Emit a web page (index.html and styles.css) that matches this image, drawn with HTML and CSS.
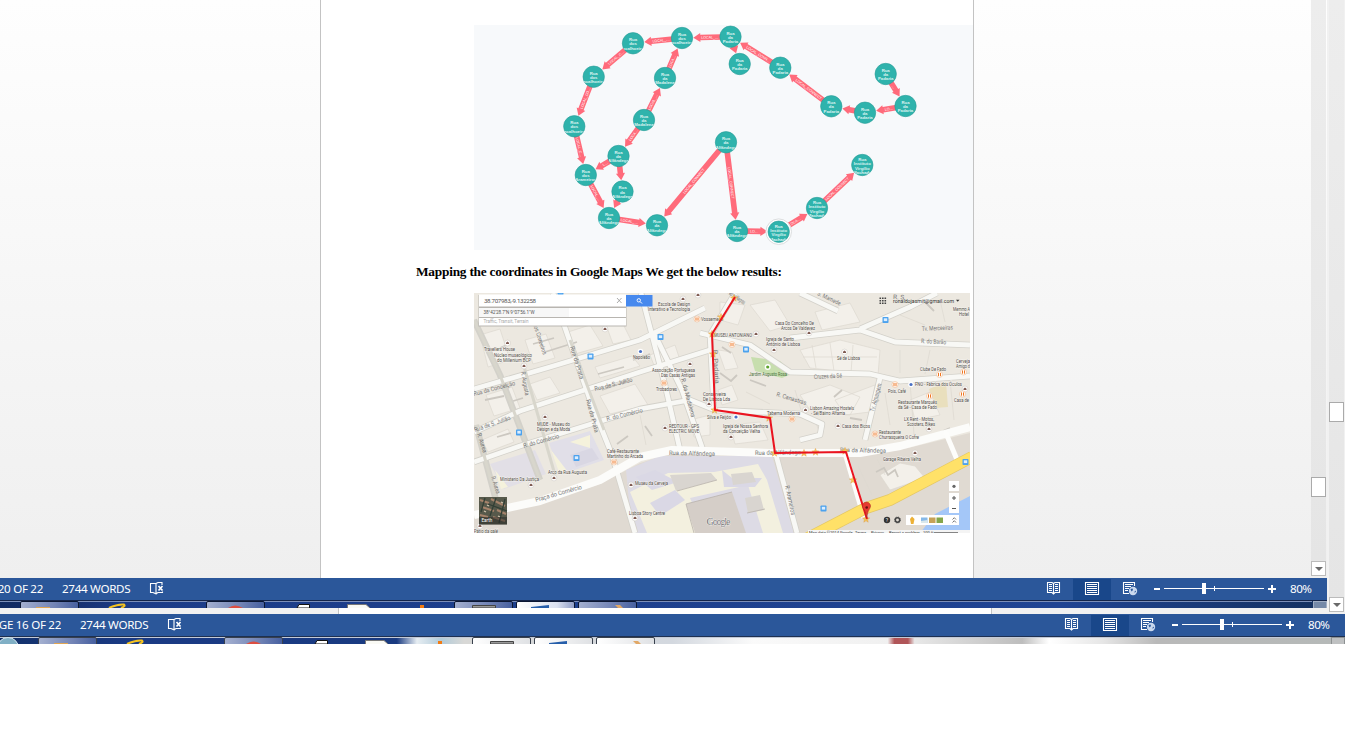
FILE: index.html
```html
<!DOCTYPE html>
<html lang="en">
<head>
<meta charset="utf-8">
<title>Document</title>
<link rel="stylesheet" href="styles.css">
</head>
<body>
<svg class="defs" aria-hidden="true">
  <defs>
    <symbol id="proof" viewBox="0 0 16 14">
      <path d="M7 2.5H1.5V11.5H4L7 12.8ZM7 2.5L9 1.5H13V4M7 12.8L9 11.5H13.5V10.5" fill="none" stroke="#fff" stroke-width="1.1"/>
      <path d="M9.5 5L13.5 9.5M13.5 5L9.5 9.5" stroke="#fff" stroke-width="1.7"/>
    </symbol>
    <symbol id="controls" viewBox="1040 0 240 22">
      <rect x="1073" y="1" width="38" height="21" fill="#19478a"/>
      <g fill="none" stroke="#fff" stroke-width="1.1">
        <path d="M1053.5 5.5L1052 4.5H1047.5V14.5H1052L1053.5 16L1055 14.5H1059.5V4.5H1055ZM1053.5 5V16"/>
        <path d="M1049 6.5H1052M1049 8.5H1052M1049 10.5H1052M1049 12.5H1052M1055 6.5H1058M1055 8.5H1058M1055 10.5H1058M1055 12.5H1058"/>
        <path d="M1085.5 4.5H1098.5V16.5H1085.5ZM1087 6.5H1097M1087 8.5H1097M1087 10.5H1097M1087 12.5H1097M1087 14.5H1097"/>
        <path d="M1129 15.5H1123.5V4.5H1134.5V8M1125 6.5H1133M1125 8.5H1131M1125 10.5H1129M1125 12.5H1128"/>
      </g>
      <circle cx="1133" cy="13" r="4.2" fill="#c9d8ee"/>
      <path d="M1130.500 11L1132.500 10.500L1133 12L1131.500 13.500ZM1134 14.500L1135.500 12.500L1136 14Z" fill="#2b579a"/>
      <g fill="#fff">
        <rect x="1154" y="10" width="6" height="2"/>
        <rect x="1164" y="10" width="100" height="1"/>
        <rect x="1202" y="5" width="4" height="11"/>
        <rect x="1214" y="8" width="1" height="5"/>
        <rect x="1268" y="10" width="8" height="2"/>
        <rect x="1271" y="7" width="2" height="8"/>
      </g>
    </symbol>
    <linearGradient id="tab" x1="0" x2="1"><stop offset="0" stop-color="#a4b0d0"/><stop offset=".6" stop-color="#7183b5"/><stop offset="1" stop-color="#465f9f"/></linearGradient>
    <linearGradient id="tabLight" x1="0" x2="1"><stop offset="0" stop-color="#fff"/><stop offset=".7" stop-color="#dbe1f0"/><stop offset="1" stop-color="#8f9dc6"/></linearGradient>
    <linearGradient id="tabWhite" x1="0" x2="1"><stop offset="0" stop-color="#fff"/><stop offset="1" stop-color="#dfe1e4"/></linearGradient>
    <g id="taskicons">
      <path d="M36 8V7H50V8" fill="#e0a552"/>
      <path d="M109 8Q117 4 124 4.500Q126 6 121 8" fill="none" stroke="#f5c320" stroke-width="2"/>
      <path d="M228 8Q235 3 243 8Z" fill="#dd4e41"/>
      <path d="M297 8L299 4.500H309.500V8Z" fill="#fff" stroke="#111"/>
      <path d="M347.500 8V4.500H366L370 8" fill="#fafaf5" stroke="#777"/>
      <rect x="420" y="5" width="4" height="3" fill="#f27b12"/>
      <path d="M472.500 8V5.500H495.500V8Z" fill="#999" stroke="#444"/>
      <path d="M531 8V7L549 5V8Z" fill="#265eaa"/>
      <path d="M615 5L620 5L623 8H618Z" fill="#e1a867"/>
    </g>
  </defs>
</svg>

<div class="screen">
  <div class="upper">
    <div class="stack">
      <div class="window">
        <div class="workspace">
          <div class="canvas">
            <div class="page">
              <svg class="graph" id="graph" viewBox="474 25 499 225"></svg>
              <h1 class="heading">Mapping the coordinates in Google Maps We get the below results:</h1>
              <svg class="map" id="map" viewBox="474 293 496 240">
                <rect x="474" y="293" width="496" height="240" fill="#ece8e0"/>
                <g class="area">
                  <path d="M474 518L540 504L600 484L640 463L672 453L770 456L850 456L900 450L970 433V533H474Z" fill="#e0dad2"/>
                  <path d="M626 470L660 456H772L794 533H632Z" fill="#dddbe5"/>
                  <path d="M630 492L668 473L714 472L758 464L767 480L783 533H763L748 485L690 498L705 533H647Z" fill="#f3f0df"/>
                  <path d="M636 477L655 470L678 482L652 490ZM650 503L675 490L685 500L660 516ZM722 470L732 478H762L755 487L724 487Z" fill="#dad8e5"/>
                  <path d="M670 475L711 473L717 480L676 491ZM731 474L752 472L756 482L733 485ZM745 498L760 495L764 510L748 513Z" fill="#d9d5d0"/>
                  <path d="M686 504L732 492L746 533H695Z" fill="#d5cec8"/>
                  <path d="M677 491L717 480M747 513L765 509M694 533L686 504L732 492" fill="none" stroke="#b9b3ac" stroke-width=".8"/>
                  <path d="M490 464L535 450L546 474L504 489Z" fill="#e2dfe6"/>
                  <path d="M549 443L590 431L604 460L560 475Z" fill="#e1dfe8"/>
                  <path d="M551 450L568 472L560 475ZM570 442L590 435V448ZM495 470L508 487L501 489Z" fill="#f5f2dc"/>
                  <path d="M570 455L592 448L599 459L576 467Z" fill="#d9d7e3"/>
                  <path d="M751 357L780 361L794 373L782 378L755 371Z" fill="#c7deae"/>
                  <path d="M929 389L946 382L948 407L935 408Z" fill="#e9dfbd"/>
                </g>
                <g class="lots">
                  <path d="M480 335L500 329L510 360L488 367ZM525 340L546 334L555 358L533 364ZM565 333L590 325L603 346L575 354ZM605 322L620 318L631 340L613 344ZM486 395L512 387L520 408L494 416ZM530 384L550 377L560 393L537 400ZM595 367L632 356L640 366L600 378ZM482 440L508 429L514 442L488 452ZM600 396L635 384L648 405L610 414ZM718 390L732 385L738 400L722 405ZM718 350L732 352L738 368L725 370ZM800 350L840 340L880 350L878 375L810 368ZM815 312L850 303L860 322L822 330ZM800 395L830 385L860 397L850 415L810 410ZM835 400L875 385L870 412L845 415ZM880 475L900 463L915 466L925 478L890 490ZM910 400L930 392L940 415L915 420ZM720 302L745 305L738 325L720 320ZM750 305L775 300L790 325L770 331ZM650 355L675 345L680 360L655 368ZM690 420L710 415V435L694 437ZM730 425L760 422L768 440L735 444Z"/>
                  <path d="M812 345L816 368M830 343L834 371M853 345L851 373M803 357H877M900 350V373M930 350L925 374M795 390L801 410M885 393L890 425M910 382L914 435M950 380L954 420M815 420L821 437M870 420L868 440M900 315L925 325M940 300L945 322M858 466L872 495M877 459L885 475M640 415L646 445M746 392L770 404"/>
                </g>
                <g class="ridge">
                  <path d="M500 348L509 344M533 344L554 338M545 352L577 342M598 374L624 367M602 390L627 381M485 400L504 396M510 402L523 398M497 437L511 433M617 444L628 436M633 360L650 354M722 347L731 353M720 373L731 381L737 375M645 426L652 436M750 380L766 386M850 418L862 420M872 405L879 400M834 397L842 390M924 301L934 311M943 431L950 428M876 472L884 468L888 475L895 470L898 477"/>
                </g>
                <g class="road-edge">
                  <path d="M474 389L550 367L640 340L705 308"/>
                  <path d="M474 432L520 411L640 372L710 350M474 462L520 446L640 409L690 400L715 410L800 414"/>
                  <path d="M553 293L590 400L612 455L635 533M641 293L665 385L680 450M655 335L682 390L703 450M735 293L710 335L714 410M700 333L750 345L790 372L870 374L900 381L970 376"/>
                  <path d="M800 293L838 311M790 338L860 330L895 342L970 345M860 329L910 307L937 293M776 455L797 533M474 320L500 375L540 480M476 425L500 515M880 378L865 440M800 440L820 435L822 424L800 414"/>
                </g>
                <g class="road">
                  <path d="M474 389L550 367L640 340L705 308M474 432L520 411L640 372L710 350M474 462L520 446L640 409L690 400L715 410L800 414"/>
                  <path d="M553 293L590 400L612 455L635 533M641 293L665 385L680 450M655 335L682 390L703 450M735 293L710 335L714 410M700 333L750 345L790 372L870 374L900 381L970 376"/>
                  <path d="M800 293L838 311M790 338L860 330L895 342L970 345M860 329L910 307L937 293M776 455L797 533M880 378L865 440M800 440L820 435L822 424L800 414"/>
                </g>
                <path d="M474 320L500 375L540 480M476 425L500 515M523 363L555 475M570 340L604 430" stroke="#d8d6cc" stroke-width="3" fill="none"/>
                <path class="avenue" d="M474 515L540 501L600 480L640 457L672 450L770 453L860 453L900 446L970 427"/>
                <path d="M845 453L864 518M945 431L958 462" stroke="#fdfdfb" stroke-width="5" fill="none"/>
                <path d="M972 495L935 514L920 533H972Z" fill="#a4c7f8"/>
                <path d="M808 538L866 508L890 500L972 457" stroke="#e4c765" stroke-width="12" fill="none"/>
                <path d="M808 538L866 508L890 500L972 457" stroke="#ffe168" stroke-width="10.500" fill="none"/>
                <g id="labels"></g>
                <g id="pins"></g>
                <g id="stars"></g>
                <path class="route" d="M735 297L712 334L715 410L770 418L775 453L846 452L867 519"/>
                <path d="M866.700 518Q866 511 863 508A4 4 0 1 1 870 508Q867.500 511 866.700 518Z" fill="#e63a31" stroke="#a52720" stroke-width=".5"/>
                <circle cx="866.700" cy="507.500" r="1.300" fill="#611"/>
                <g class="search">
                  <path d="M478.500 295H626.500V326.500H478.500Z" fill="#b8b5b0"/>
                  <path d="M479 294.500H626V306.500H479ZM479 308H626V317H479ZM479 318H626V325.500H479Z" fill="#fff"/>
                  <rect x="479" y="308" width="90" height="9" fill="#f7f7f7"/>
                  <rect x="626" y="295" width="26.500" height="11.500" fill="#4789ee"/>
                  <circle cx="638.800" cy="300.300" r="1.700" fill="none" stroke="#fff" stroke-width=".9"/>
                  <path d="M640 301.500L642 303.500" stroke="#fff"/>
                  <path d="M617 298L621.500 303M621.500 298L617 303" stroke="#888" stroke-width=".7"/>
                  <text x="484" y="303" font-size="6.200" textLength="52" fill="#555">38.707983,-9.132258</text>
                  <text x="483.500" y="314.300" font-size="4.600" textLength="51" fill="#555">38°42'28.7"N 9°07'56.1"W</text>
                  <text x="483.500" y="323" font-size="4.600" textLength="45" fill="#aaa">Traffic, Transit, Terrain</text>
                </g>
                <path d="M879.500 297.500h1.600v1.600h-1.600zm2.500 0h1.600v1.600h-1.600zm2.500 0h1.600v1.600h-1.600zm-5 2.500h1.600v1.600h-1.600zm2.500 0h1.600v1.600h-1.600zm2.500 0h1.600v1.600h-1.600zm-5 2.500h1.600v1.600h-1.600zm2.500 0h1.600v1.600h-1.600zm2.500 0h1.600v1.600h-1.600z" fill="#444"/>
                <path d="M956 299.800H959.500L957.700 301.800Z" fill="#333"/>
                <rect x="479" y="497" width="28" height="27.500" fill="#57594b"/>
                <path d="M480 500L489 503M491 499L505 506M482 507L494 511M497 510L506 514M480 515L488 517M493 517L505 521" stroke="#a6836b" stroke-width="2"/>
                <path d="M485 498L481 512M496 498L490 516M505 499L499 523M488 504L507 511" stroke="#313f35" stroke-width="1.300"/>
                <path d="M487 505l2 1M501 502l2 1M484 511l2 1M498 516l2 1" stroke="#d3c5af" stroke-width="1.300"/>
                <rect x="479" y="517" width="28" height="7.500" fill="#222" opacity=".45"/>
                <text x="481.500" y="521.500" font-size="4.600" fill="#fff">Earth</text>
                <g fill="#fff"><rect x="949" y="481" width="10" height="10"/><rect x="949" y="493" width="10" height="20"/><rect x="906" y="515" width="53" height="10"/></g>
                <path d="M952 498H956M954 496V500M952 508.500H956" stroke="#555" stroke-width="1"/>
                <circle cx="954" cy="486.300" r="1.600" fill="#666"/>
                <circle cx="887" cy="520" r="3.200" fill="#333"/><text x="885.800" y="522" font-size="5" fill="#fff">?</text>
                <circle cx="897.500" cy="520" r="2.200" fill="none" stroke="#444" stroke-width="1.500"/>
                <circle cx="897.500" cy="520" r="3" fill="none" stroke="#444" stroke-width=".8" stroke-dasharray="1.200 1.150"/>
                <path d="M912 516.500L914.500 519L913.500 524H911L910 519Z" fill="#edb136"/>
                <rect x="921" y="517.500" width="6.500" height="5.500" fill="#86b9e8"/><rect x="929" y="517.500" width="6.500" height="5.500" fill="#c7a257"/><rect x="936.500" y="517.500" width="6.500" height="5.500" fill="#84a64b"/>
                <path d="M921 523V521L927.500 520V523Z" fill="#d9e8ec"/>
                <path d="M952.500 519.500L954.300 517.700L956 519.500M952.500 522.500L954.300 520.700L956 522.500" fill="none" stroke="#555" stroke-width=".8"/>
                <rect x="808" y="530" width="162" height="3" fill="#f4f4f4"/>
                <g font-size="4" fill="#333"><text x="809" y="534">Map data ©2014 Google</text><text x="855" y="534">Terms</text><text x="871" y="534">Privacy</text><text x="889" y="534">Report a problem</text><text x="923" y="534">100 ft</text></g>
                <path d="M934 532.500H958" stroke="#555" stroke-width=".7"/>
                <text class="logo" x="706.500" y="524.500" textLength="24">Google</text>
              </svg>
            </div>
          </div>
          <div class="scrollbar scrollbar-inner"><div class="track"><div class="thumb"></div></div><div class="arrow"></div></div>
        </div>
        <div class="status">
          <span class="pageno">20 OF 22</span><span class="words">2744 WORDS</span>
          <svg class="proof"><use href="#proof"/></svg>
          <svg class="controls"><use href="#controls"/></svg><span class="zoom">80%</span>
        </div>
        <svg class="taskbar" viewBox="0 0 1327 8">
          <defs><linearGradient id="bar"><stop offset="0" stop-color="#112b63"/><stop offset=".04" stop-color="#152c68"/><stop offset=".1" stop-color="#1c3c88"/><stop offset=".8" stop-color="#204493"/><stop offset="1" stop-color="#14305f"/></linearGradient></defs>
          <rect width="1327" height="8" fill="url(#bar)"/>
          <rect width="1327" height="1" fill="#142449"/><rect y="1" width="1312" height="1" fill="#7d8fb8"/>
          <g stroke="#0b1733"><rect x="20.500" y="1.500" width="58" height="10" rx="1.500" fill="url(#tab)"/><rect x="206.500" y="1.500" width="58" height="10" rx="1.500" fill="url(#tab)"/><rect x="454.500" y="1.500" width="58" height="10" rx="1.500" fill="url(#tab)"/><rect x="516.500" y="1.500" width="58" height="10" rx="1.500" fill="url(#tabLight)"/><rect x="578.500" y="1.500" width="58" height="10" rx="1.500" fill="url(#tab)"/></g>
          <use href="#taskicons"/>
          <rect x="1313.500" y="1.500" width="13" height="9" fill="#7589a8" stroke="#a1aec4"/>
        </svg>
      </div>
      <div class="behind"><div class="behind-page"></div></div>
    </div>
    <div class="scrollbar scrollbar-outer"><div class="track"><div class="thumb"></div></div><div class="arrow"></div></div>
  </div>
  <div class="status status-outer">
    <span class="pageno">GE 16 OF 22</span><span class="words">2744 WORDS</span>
    <svg class="proof"><use href="#proof"/></svg>
    <svg class="controls"><use href="#controls"/></svg><span class="zoom">80%</span>
  </div>
  <svg class="taskbar" viewBox="0 0 1345 8">
    <defs><linearGradient id="glass" gradientUnits="userSpaceOnUse" x1="0" x2="1345" y1="0" y2="0"><stop offset="0" stop-color="#12306a"/><stop offset=".1" stop-color="#1a3a84"/><stop offset=".295" stop-color="#193a80"/><stop offset=".31" stop-color="#e6edf2"/><stop offset=".328" stop-color="#b2cbd9"/><stop offset=".345" stop-color="#d8d8d6"/><stop offset=".5" stop-color="#d3d8df"/><stop offset=".56" stop-color="#fafafa"/><stop offset=".66" stop-color="#f0f0f0"/><stop offset=".665" stop-color="#b05558"/><stop offset=".675" stop-color="#b05558"/><stop offset=".68" stop-color="#e8e8e8"/><stop offset=".76" stop-color="#bdbdbd"/><stop offset=".78" stop-color="#fff"/><stop offset=".82" stop-color="#e6e6e6"/><stop offset=".86" stop-color="#b9b9b9"/><stop offset="1" stop-color="#b5b9b8"/></linearGradient></defs>
    <rect width="1345" height="8" fill="url(#glass)"/>
    <rect width="1345" height="1" fill="#1e3051"/><rect y="1" width="1330" height="1" fill="#c3cad7"/>
    <circle cx="8" cy="12" r="10.500" fill="#80afc5" stroke="#d5e8f0"/>
    <g stroke="#39414d"><rect x="38.500" y="1.500" width="58" height="10" rx="1.500" fill="url(#tab)"/><rect x="224.500" y="1.500" width="58" height="10" rx="1.500" fill="url(#tab)"/><rect x="472.500" y="1.500" width="58" height="10" rx="1.500" fill="url(#tabWhite)"/><rect x="534.500" y="1.500" width="58" height="10" rx="1.500" fill="url(#tabWhite)"/><rect x="596.500" y="1.500" width="58" height="10" rx="1.500" fill="url(#tabWhite)"/></g>
    <use href="#taskicons" x="18"/>
    <rect x="1331.500" y="1.500" width="13" height="9" fill="#bfc1c2" stroke="#8d9192"/>
  </svg>
</div>
<script src="diagram.js"></script>
</body>
</html>
```
FILE: styles.css
```css
* { box-sizing: border-box; }
body { margin: 0; background: #fff; overflow: hidden; }
.defs { position: absolute; width: 0; height: 0; }
.screen { width: 1345px; height: 644px; overflow: hidden; }
.upper { display: flex; height: 614px; background: #f1f1f1; }
.stack { width: 1327px; display: flex; flex-direction: column; }
.window { height: 608px; overflow: hidden; }
.workspace { display: flex; height: 578px; background: linear-gradient(#fefefe, #efefef); }
.canvas { width: 1311px; padding-left: 320px; }
.page { width: 654px; height: 578px; padding-top: 25px; background: #fff; border: solid #c3c3c3; border-width: 0 1px; overflow: hidden; }
.graph { display: block; width: 499px; height: 225px; margin-left: 153px; background: #f7f9fb; }
.heading { margin: 14px 0 13px 95px; height: 16px; font: bold 13.33px/16px "Liberation Serif", serif; letter-spacing: -.225px; white-space: nowrap; color: #000; }
.map { display: block; width: 496px; height: 240px; margin-left: 153px; font-family: Roboto, sans-serif; }

.scrollbar { display: flex; flex-direction: column; width: 15px; }
.scrollbar-inner { padding-bottom: 2px; }
.scrollbar-outer { margin-left: 2px; padding-bottom: 2px; }
.track { flex: 1; background: linear-gradient(#ededed, #e5e5e5); }
.scrollbar-inner .track { padding-top: 477px; }
.scrollbar-outer .track { padding-top: 402px; }
.thumb { width: 15px; height: 20px; background: #fff; border: 1px solid #aaa; }
.arrow { display: flex; align-items: center; justify-content: center; width: 15px; height: 15px; background: #fff; border: 1px solid #bbb; }
.arrow::after { content: ""; border: solid transparent; border-width: 4px 4px 0; border-top-color: #6a6a6a; }

.status { display: flex; align-items: center; height: 22px; background: #2b579a; color: #fff; font: 11.6px/22px "Noto Sans", sans-serif; letter-spacing: -.3px; white-space: nowrap; }
.pageno { display: flex; justify-content: flex-end; width: 43px; overflow: hidden; }
.status-outer .pageno { width: 61px; }
.words { width: 68px; margin-left: 19px; }
.proof { width: 16px; height: 14px; margin: 0 0 2px 19px; }
.controls { width: 240px; height: 22px; margin-left: 875px; }
.zoom { margin-left: 10px; letter-spacing: -.5px; }
.taskbar { display: block; width: 100%; height: 8px; }
.behind { height: 6px; padding-left: 338px; }
.behind-page { width: 654px; height: 6px; background: #fff; border: solid #c3c3c3; border-width: 0 1px; }

.edge { fill: #ff6b7b; }
.edge-name { font: 3.6px "Liberation Sans", sans-serif; fill: #fff; text-anchor: middle; }
.node { fill: #2fb3ac; stroke: #299c97; stroke-width: .6; }
.node-name { font: bold 4.3px "Liberation Sans", sans-serif; fill: #dcf3f1; text-anchor: middle; }
.halo { fill: #fff; stroke: #dcdedf; stroke-width: 1; }

.lots path { fill: #f3f0ea; stroke: #dcd8d0; stroke-width: .7; }
.lots path + path { fill: none; }
.ridge path { fill: none; stroke: #ccc8c1; stroke-width: 1.8; }
.road path, .road-edge path { fill: none; stroke-linejoin: round; }
.road-edge path { stroke: #d3d1ca; stroke-width: 6.4; }
.road path { stroke: #f8f8f5; stroke-width: 4.8; }
.avenue { fill: none; stroke: #fcfcfa; stroke-width: 8; stroke-linejoin: round; }
.route { fill: none; stroke: #ea1420; stroke-width: 2; stroke-linejoin: round; }
.street { font-size: 6.2px; fill: #777; }
.place { font-size: 4.5px; fill: #504b46; stroke: #f6f4f0; stroke-width: .8; paint-order: stroke; }
.park { font-size: 4.5px; fill: #45703c; }
.account { font-size: 6px; fill: #333; }
.logo { font: 10px "Liberation Serif", serif; fill: #777; stroke: #fff; stroke-width: .6; paint-order: stroke; }
```
FILE: diagram.js
```js
const NS = "http://www.w3.org/2000/svg";
function add(parent, tag, attrs, text) {
  const el = document.createElementNS(NS, tag);
  for (const k in attrs) el.setAttribute(k, attrs[k]);
  if (text) el.textContent = text;
  parent.appendChild(el);
  return el;
}

const BAC = "Rua|dos|Bacalhoeiros", PAD = "Rua|da|Padaria", MAD = "Rua|da|Madalena";
const ALF = "Rua|da|Alfândega", VIR = "Rua|Instituto|Virgílio|Machado";
const nodes = {
  A: [633, 43.3, BAC], B: [682, 38, BAC], C: [730.5, 36.7, PAD], D: [739.7, 64, PAD],
  E: [593.7, 76.7, BAC], F: [665, 78, MAD], G: [574.3, 126.3, BAC], H: [644, 120, MAD],
  I: [618.5, 156, ALF], J: [585.8, 175, "Rua|dos|Arameiros"], K: [622.5, 191.5, ALF],
  L: [609, 218, ALF], M: [657, 225.3, ALF], N: [726, 142.3, ALF], O: [737, 231, ALF],
  P: [780.3, 67.7, PAD], Q: [831.3, 106.3, PAD], R: [865, 112.7, PAD], S: [905.5, 106, PAD],
  T: [885.7, 74, PAD], U: [778.7, 231.7, VIR], V: [817, 208, VIR], W: [862.3, 165, VIR]
};
const edges = [
  ["B", "A", "LOCAL_…"], ["A", "E", "LOCAL_C…"], ["E", "G", "LOCAL_CO…"], ["G", "J", "LOCAL_C…"],
  ["J", "L", "LOCAL_…"], ["I", "J", "L…"], ["I", "K", ""], ["K", "L", ""], ["L", "M", "LOCAL_…"],
  ["H", "I", "LOCA…"], ["H", "F", "LOCAL_…"], ["F", "B", "LOCA…"], ["C", "B", "LOCAL_…"], ["C", "D", ""],
  ["P", "C", "LOCAL_CONN…"], ["Q", "P", "LOCAL_CONNECT"], ["R", "Q", ""], ["S", "R", "LO…"], ["T", "S", "…"],
  ["N", "M", "LOCAL_CONNECT"], ["N", "O", "LOCAL_CONNECT"], ["O", "U", "LO…"], ["U", "V", "LOCA…"], ["V", "W", "LOCAL_CONNECT"]
];
const graph = document.getElementById("graph");
for (const [from, to, name] of edges) {
  const [x1, y1] = nodes[from], [x2, y2] = nodes[to];
  const len = Math.hypot(x2 - x1, y2 - y1);
  const angle = Math.atan2(y2 - y1, x2 - x1) * 180 / Math.PI;
  const tip = len - 11.3, neck = Math.max(tip - 7, 10);
  const g = add(graph, "g", { transform: `translate(${x1} ${y1}) rotate(${angle})` });
  add(g, "path", { class: "edge", d: `M9 -2.8H${neck}V-4.6L${tip} 0L${neck} 4.6V2.8H9Z` });
  const flip = Math.abs(angle) > 90 ? " rotate(180)" : "";
  if (name) add(g, "text", { class: "edge-name", transform: `translate(${(11 + neck) / 2} 0)${flip}`, y: 1.3 }, name);
}
for (const id in nodes) {
  const [x, y, name] = nodes[id];
  if (id === "U") add(graph, "circle", { class: "halo", cx: x, cy: y, r: 12.8 });
  add(graph, "circle", { class: "node", cx: x, cy: y, r: 10.7 });
  const clip = add(graph, "clipPath", { id: "clip" + id });
  add(clip, "circle", { cx: x, cy: y, r: 10.7 });
  const g = add(graph, "g", { "clip-path": `url(#clip${id})` });
  const lines = name.split("|");
  lines.forEach((t, i) => add(g, "text", { class: "node-name", x, y: y - (lines.length === 4 ? 4 : 2.2) + i * 4.3 }, t));
}

// text, x, baseline y, width, rotation
const labels = {
  street: [
    ["Rua da Conceição", 474, 396, 43, -15], ["Rua de S. Julião", 595, 391, 39, -14], ["Rua de S. Julião", 475, 432, 38, -19],
    ["R. do Comércio", 607, 421, 37, -14], ["R. do Comércio", 524, 448, 37, -16], ["Praça do Comércio", 536, 502, 48, -16],
    ["Rua da Prata", 570, 347, 34, 73], ["Rua da Prata", 586, 400, 34, 75], ["Rua dos Correeiros", 530, 315, 42, 72],
    ["R. Augusta", 521, 372, 24, 80], ["R. Aurea", 477, 434, 20, 72], ["R. Aurea", 491, 477, 18, 72],
    ["R. da Madalena", 681, 379, 40, 75], ["Rua da Alfândega", 669, 455, 46, 1], ["Rua da Alfândega", 755, 455, 46, -1],
    ["Rua da Alfândega", 840, 452, 46, 1], ["R. Arameiros", 785, 486, 30, 78], ["R. Canastras", 776, 396, 31, 17],
    ["Cruzes da Sé", 814, 379, 28, -3], ["R. do Barão", 921, 343, 25, 3], ["Tv. Merceeiras", 922, 331, 31, -3],
    ["S. Mamede", 817, 295, 25, 25], ["Tv. Almargem", 874, 412, 29, -75], ["R. Padaria", 713, 350, 34, 86],
    ["R. Pedras Negras", 724, 291, 24, 35], ["R. S.", 893, 299, 13, 2]
  ],
  place: [
    ["Escola de Design", 658, 305.5, 32], ["Interativo e Tecnologia", 648, 311, 42], ["Vossemecê", 701, 321, 22],
    ["MUSEU ANTONIANO", 714, 336.5, 38], ["Casa Do Concelho De", 775, 325, 39], ["Arcos De Valdevez", 781, 330, 34],
    ["Igreja de Santo", 766, 341, 28], ["António de Lisboa", 766, 346, 34], ["Travellers House", 484, 351, 31],
    ["Núcleo museológico", 494, 357, 38], ["do Millenium BCP", 497, 362, 34], ["Napoleão", 633, 359, 17],
    ["Associação Portuguesa", 652, 372, 43], ["Das Casas Antigas", 661, 377, 34], ["Trobadores", 656, 391, 21],
    ["Conserveira", 703, 396, 23], ["De Lisboa Lda", 703, 401, 27], ["Taberna Moderna", 767, 415, 33],
    ["Silva e Feijóo", 707, 419, 24], ["REDTOUR - GPS", 669, 428, 30], ["ELECTRIC MOVE", 669, 433, 30],
    ["Igreja de Nossa Senhora", 723, 428, 45], ["da Conceição Velha", 723, 433, 37], ["MUDE - Museu do", 537, 426, 33],
    ["Design e da Moda", 537, 431, 33], ["Café-Restaurante", 607, 453, 32], ["Martinho do Arcada", 607, 458, 36],
    ["Arco da Rua Augusta", 548, 474, 39], ["Ministerio Da Justiça", 500, 481, 39], ["Museu da Cerveja", 635, 485, 33],
    ["Lisboa Story Centre", 629, 515, 36], ["Pátio da galé", 474, 533, 24], ["Sé de Lisboa", 837, 360, 23],
    ["Clube De Fado", 920, 371, 26], ["Pois, Café", 888, 393, 18], ["FNO - Fábrica dos Óculos", 915, 386, 47],
    ["Restaurante Marquês", 898, 404, 39], ["da Sé - Casa de Fado", 898, 409, 39], ["Lisbon Amazing Hostels", 810, 410, 44],
    ["- Sé/Bairro Alfama", 811, 415, 34], ["Casa dos Bicos", 842, 428, 28], ["LX Rent - Motos,", 904, 421, 30],
    ["Scooters, Bikes", 907, 426, 28], ["Restaurante", 879, 434, 22], ["Churrasqueira O Cofre", 879, 439, 40],
    ["Garage Ribeira Velha", 883, 461, 38], ["Memmo A", 953, 311, 17], ["Hotel", 959, 316, 10],
    ["Cerveja", 956, 363, 14], ["Amigo d", 956, 368, 14], ["Casa de", 954, 402, 15]
  ],
  park: [["Jardim Augusto Rosa", 749, 375.5, 38]],
  account: [["ronaldojasmit@gmail.com", 893, 302.5, 61]]
};
const labelLayer = document.getElementById("labels");
for (const kind in labels)
  for (const [t, x, y, w, r = 0] of labels[kind])
    add(labelLayer, "text", { class: kind, transform: `translate(${x} ${y}) rotate(${r})`, textLength: w, lengthAdjust: "spacingAndGlyphs" }, t);

const pinLayer = document.getElementById("pins");
const brown = [[507.5, 343], [524, 366], [605, 329], [683, 299], [698, 295], [756, 334], [774, 350], [809, 333], [690, 364], [709, 404], [665, 428], [731, 437], [545, 417], [554, 478], [531, 485], [631, 485], [635, 518], [480, 526], [844.5, 352], [838, 426], [805.5, 410], [929, 429], [915, 453], [965, 389]];
const orange = [[697, 319], [732, 344.5], [664, 383], [792, 419], [614, 462], [939.5, 374.5], [895, 384.5], [929.5, 396], [963.5, 372], [962.5, 394], [875, 434]];
const buses = [[560.5, 292], [590.5, 356.5], [660.5, 337], [746, 349.5], [519, 432.5], [576.5, 458], [885.5, 320], [965.5, 462], [823.5, 508.5]];
for (const [cx, cy] of brown) {
  add(pinLayer, "circle", { cx, cy, r: 2.9, fill: "#fff", stroke: "#bbb5ae", "stroke-width": .4 });
  add(pinLayer, "path", { d: `M${cx - 1.5} ${cy + 1}V${cy - .3}L${cx} ${cy - 1.4}L${cx + 1.5} ${cy - .3}V${cy + 1}Z`, fill: "#7e5950" });
}
for (const [cx, cy] of orange) {
  add(pinLayer, "circle", { cx, cy, r: 3, fill: "#fff", stroke: "#efab76", "stroke-width": .5 });
  add(pinLayer, "path", { d: `M${cx - 1} ${cy - 1.6}V${cy + 1.7}M${cx + 1} ${cy - 1.6}V${cy + 1.7}`, stroke: "#ef7722", "stroke-width": 1 });
}
for (const [x, y] of buses) {
  add(pinLayer, "rect", { x: x - 3, y: y - 3, width: 6, height: 6, rx: .8, fill: "#4ca2ee" });
  add(pinLayer, "rect", { x: x - 1.7, y: y - 1.7, width: 3.4, height: 2.8, fill: "#dceeff" });
}
for (const [cx, cy] of [[640.5, 351.5], [736, 417], [911, 384.5]]) {
  add(pinLayer, "circle", { cx, cy, r: 2.8, fill: "#fff" });
  add(pinLayer, "circle", { cx, cy, r: 1.6, fill: "#4a70c4" });
}
add(pinLayer, "circle", { cx: 767.7, cy: 367, r: 3, fill: "#fff" });
add(pinLayer, "circle", { cx: 767.7, cy: 367, r: 1.6, fill: "#5da32d" });

const starLayer = document.getElementById("stars");
for (const [x, y] of [[734, 298], [721, 317], [712, 334], [713, 354], [714.5, 410], [769, 418], [774.5, 453], [804, 453], [815.5, 452], [845, 451], [853, 480], [866, 519]])
  add(starLayer, "path", { transform: `translate(${x} ${y})`, d: "M0 -3.6L1 -1.2L3.6 -1L1.6 .6L2.2 3.2L0 1.7L-2.2 3.2L-1.6 .6L-3.6 -1L-1 -1.2Z", fill: "#f6c34d", stroke: "#df8f30", "stroke-width": .4, opacity: .9 });
```
